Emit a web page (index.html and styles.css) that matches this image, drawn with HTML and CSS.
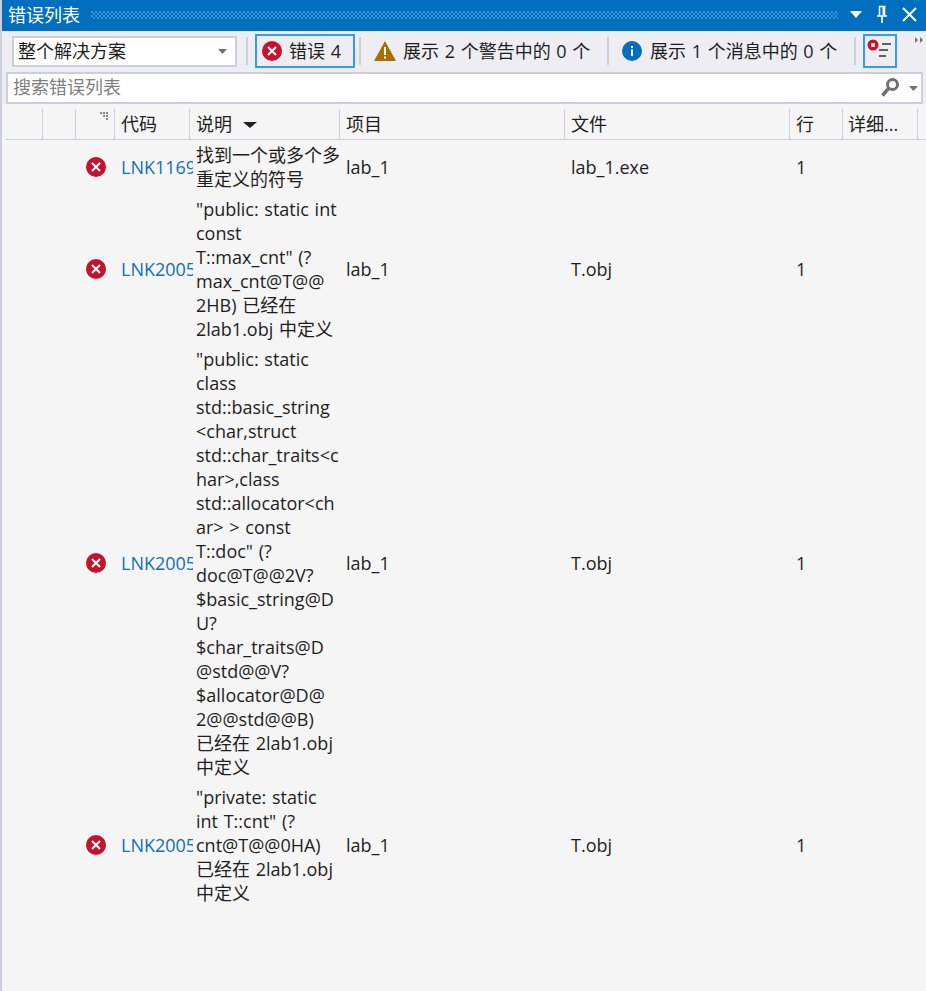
FILE: index.html
```html
<!DOCTYPE html>
<html lang="zh-CN">
<head>
<meta charset="utf-8">
<title>错误列表</title>
<link rel="stylesheet" href="styles.css">
</head>
<body>
<div class="panel">
  <header class="titlebar">
    <span class="title">错误列表</span>
    <div class="grip"></div>
    <div class="winbtns">
      <svg class="wb-menu" width="14" height="8" viewBox="0 0 14 8"><path d="M1 0h12L7 7z" fill="#fff"/></svg>
      <svg class="wb-pin" width="12" height="19" viewBox="0 0 12 19"><path d="M3 1.500h6.500M3.500 1.500v9M8.500 1.500v9M1 11h10M6 11v7" stroke="#fff" stroke-width="1.600" fill="none"/><path d="M6.500 2h2v8h-2z" fill="#fff"/></svg>
      <svg class="wb-close" width="15" height="15" viewBox="0 0 15 15"><path d="M1 1l13 13M14 1L1 14" stroke="#fff" stroke-width="2"/></svg>
    </div>
  </header>
  <div class="toolbar">
    <div class="combo"><span>整个解决方案</span><svg width="9" height="5" viewBox="0 0 9 5"><path d="M0 0h9L4.500 5z" fill="#717171"/></svg></div>
    <div class="sep s1"></div>
    <div class="btn on errbtn">
      <svg class="ic" width="20" height="20" viewBox="0 0 20 20"><circle cx="10" cy="10" r="10" fill="#c5122f"/><path d="M6 6l8 8M14 6l-8 8" stroke="#fff" stroke-width="2"/></svg>
      <span>错误 4</span>
    </div>
    <div class="sep s2"></div>
    <div class="btn warn">
      <svg class="ic" width="22" height="20" viewBox="0 0 22 20"><path d="M11 0l11 20H0z" fill="#a86f00"/><path d="M10 6h2v8h-2zM10 15.500h2v2h-2z" fill="#fff"/></svg>
      <span>展示 2 个警告中的 0 个</span>
    </div>
    <div class="sep s3"></div>
    <div class="btn info">
      <svg class="ic" width="20" height="20" viewBox="0 0 20 20"><circle cx="10" cy="10" r="10" fill="#006fc0"/><path d="M9 8.500h2V15H9zM9 5h2v2H9z" fill="#fff"/></svg>
      <span>展示 1 个消息中的 0 个</span>
    </div>
    <div class="sep s4"></div>
    <div class="filter">
      <svg width="30" height="30" viewBox="0 0 30 30"><circle cx="8" cy="9" r="5.500" fill="#c5122f"/><path d="M6.200 7.200h3.600v3.600H6.200z" fill="#fff"/><path d="M17 8h9M14 14h9M14 20h7" stroke="#333" stroke-width="1.500" fill="none"/></svg>
    </div>
    <svg class="overflow" width="8" height="6" viewBox="0 0 8 6"><path d="M0 0l3 3-3 3zM5 0l3 3-3 3z" fill="#717171"/></svg>
  </div>
  <div class="searchwrap">
    <div class="search">
      <span class="ph">搜索错误列表</span>
      <svg class="mag" width="20" height="20" viewBox="0 0 20 20"><circle cx="12.500" cy="7.500" r="5" fill="none" stroke="#717171" stroke-width="3"/><path d="M8.500 11.500L2.500 18.500" stroke="#717171" stroke-width="3.500"/></svg>
      <svg class="drop" width="9" height="5" viewBox="0 0 9 5"><path d="M0 0h9L4.500 5z" fill="#717171"/></svg>
    </div>
  </div>
  <div class="list">
    <div class="row head">
      <div class="hc"></div>
      <div class="hc"></div>
      <div class="hc dots"><svg width="9" height="9" viewBox="0 0 9 9"><path d="M0 0h2v2H0zM3 0h2v2H3zM6 0h2v2H6zM3 3h2v2H3zM6 3h2v2H6zM6 6h2v2H6z" fill="#8a8a8a"/></svg></div>
      <div class="hc">代码</div>
      <div class="hc">说明<svg class="sort" width="14" height="6" viewBox="0 0 14 6"><path d="M0 0h14L7 6z" fill="#1e1e1e"/></svg></div>
      <div class="hc">项目</div>
      <div class="hc">文件</div>
      <div class="hc">行</div>
      <div class="hc detail">详细...</div>
      <div class="hc"></div>
    </div>

    <div class="row item">
      <div></div><div></div>
      <div class="cell iconcell"><svg width="20" height="20" viewBox="0 0 20 20"><circle cx="10" cy="10" r="10" fill="#c5122f"/><path d="M6 6l8 8M14 6l-8 8" stroke="#fff" stroke-width="2"/></svg></div>
      <div class="cell code">LNK1169</div>
      <div class="desc">找到一个或多个多<br>重定义的符号</div>
      <div class="cell">lab_1</div>
      <div class="cell">lab_1.exe</div>
      <div class="cell">1</div>
    </div>

    <div class="row item">
      <div></div><div></div>
      <div class="cell iconcell"><svg width="20" height="20" viewBox="0 0 20 20"><circle cx="10" cy="10" r="10" fill="#c5122f"/><path d="M6 6l8 8M14 6l-8 8" stroke="#fff" stroke-width="2"/></svg></div>
      <div class="cell code">LNK2005</div>
      <div class="desc">"public: static int<br>const<br>T::max_cnt" (?<br>max_cnt@T@@<br>2HB) 已经在<br>2lab1.obj 中定义</div>
      <div class="cell">lab_1</div>
      <div class="cell">T.obj</div>
      <div class="cell">1</div>
    </div>

    <div class="row item">
      <div></div><div></div>
      <div class="cell iconcell"><svg width="20" height="20" viewBox="0 0 20 20"><circle cx="10" cy="10" r="10" fill="#c5122f"/><path d="M6 6l8 8M14 6l-8 8" stroke="#fff" stroke-width="2"/></svg></div>
      <div class="cell code">LNK2005</div>
      <div class="desc">"public: static<br>class<br>std::basic_string<br>&lt;char,struct<br>std::char_traits&lt;c<br>har&gt;,class<br>std::allocator&lt;ch<br>ar&gt; &gt; const<br>T::doc" (?<br>doc@T@@2V?<br>$basic_string@D<br>U?<br>$char_traits@D<br>@std@@V?<br>$allocator@D@<br>2@@std@@B)<br>已经在 2lab1.obj<br>中定义</div>
      <div class="cell">lab_1</div>
      <div class="cell">T.obj</div>
      <div class="cell">1</div>
    </div>

    <div class="row item">
      <div></div><div></div>
      <div class="cell iconcell"><svg width="20" height="20" viewBox="0 0 20 20"><circle cx="10" cy="10" r="10" fill="#c5122f"/><path d="M6 6l8 8M14 6l-8 8" stroke="#fff" stroke-width="2"/></svg></div>
      <div class="cell code">LNK2005</div>
      <div class="desc">"private: static<br>int T::cnt" (?<br>cnt@T@@0HA)<br>已经在 2lab1.obj<br>中定义</div>
      <div class="cell">lab_1</div>
      <div class="cell">T.obj</div>
      <div class="cell">1</div>
    </div>
  </div>
</div>
</body>
</html>
```
FILE: styles.css
```css
* { box-sizing: border-box; }
html, body { margin: 0; height: 100%; overflow: hidden; }
body {
  font-family: "Open Sans", "Noto Sans CJK SC", sans-serif;
  font-size: 18px;
  line-height: 24px;
  word-spacing: 1px;
  color: #1e1e1e;
  background: #f5f5f5;
}
.panel {
  height: 991px;
  border-left: 2px solid #ccceDB;
  display: flex;
  flex-direction: column;
}
.titlebar {
  height: 31px;
  background: #006fc0;
  display: flex;
  align-items: center;
  padding-left: 6px;
  color: #fff;
}
.title { width: 83px; flex: none; position: relative; top: -1px; }
.grip {
  width: 747px;
  height: 8px;
  flex: none;
  position: relative;
  top: -1px;
  background-image:
    radial-gradient(circle at 1px 1px, #3a8fd2 1px, transparent 1.2px),
    radial-gradient(circle at 3px 3px, #3a8fd2 1px, transparent 1.2px);
  background-size: 4px 4px;
}
.winbtns { display: flex; align-items: center; position: relative; top: -1px; }
.wb-menu { margin-left: 11px; }
.wb-pin { margin-left: 13px; }
.wb-close { margin-left: 14px; }

.toolbar {
  height: 40px;
  background: #eeeef2;
  display: flex;
  align-items: center;
  padding-left: 10px;
}
.combo {
  width: 225px;
  height: 31px;
  border: 2px solid #ccceDB;
  background: #fff;
  display: flex;
  align-items: center;
  justify-content: space-between;
  padding: 0 8px 0 4px;
  flex: none;
}
.sep { width: 2px; height: 28px; background: #ccceDB; flex: none; }
.s1 { margin-left: 9px; }
.s2 { margin-left: 4px; }
.s3 { margin-left: 16px; }
.s4 { margin-left: 17px; }
.btn { display: flex; align-items: center; height: 34px; flex: none; }
.ic { flex: none; }
.errbtn { margin-left: 7px; width: 100px; border: 2px solid #3399ff; padding-left: 5px; }
.errbtn span { margin-left: 7px; white-space: nowrap; }
.warn { margin-left: 13px; }
.warn span { margin-left: 7px; width: 188px; white-space: nowrap; }
.info { margin-left: 13px; }
.info span { margin-left: 8px; width: 187px; white-space: nowrap; }
.filter {
  width: 34px;
  height: 34px;
  margin-left: 7px;
  border: 2px solid #3399ff;
  flex: none;
}
.filter svg { display: block; }
.overflow { margin-left: 18px; align-self: flex-start; margin-top: 6px; flex: none; }

.searchwrap {
  height: 33px;
  background: #eeeef2;
  padding: 1px 3px 0 4px;
}
.search {
  height: 32px;
  background: #fff;
  border: 2px solid #ccceDB;
  display: flex;
  align-items: center;
}
.ph { color: #808080; margin-left: 5px; flex: 1; position: relative; top: -1px; }
.mag { margin-right: 9px; position: relative; top: -1px; flex: none; }
.drop { margin-right: 3px; flex: none; }

.list { flex: 1; background: #f5f5f5; padding-left: 3px; }
.row {
  display: grid;
  grid-template-columns: 38px 33px 39px 75px 150px 225px 225px 53px 75px 1fr;
}
.head {
  height: 36px;
  border-bottom: 1px solid #ccceDB;
  padding-top: 5px;
}
.hc {
  border-right: 1px solid #ccceDB;
  padding-left: 6px;
  height: 30px;
  line-height: 30px;
  white-space: nowrap;
  position: relative;
}
.hc:last-child { border-right: 0; }
.hc.detail { padding-left: 5px; }
.dots svg { position: absolute; right: 5px; top: 3px; }
.sort { margin-left: 11px; vertical-align: 3px; }
.item { padding: 3px 0; }
.cell {
  align-self: center;
  padding-left: 6px;
  white-space: nowrap;
}
.iconcell { padding-left: 10px; height: 20px; }
.iconcell svg { display: block; }
.code {
  color: #0e70c0;
  overflow: hidden;
  margin-right: -3px;
}
.desc { padding-left: 6px; white-space: nowrap; }
```
